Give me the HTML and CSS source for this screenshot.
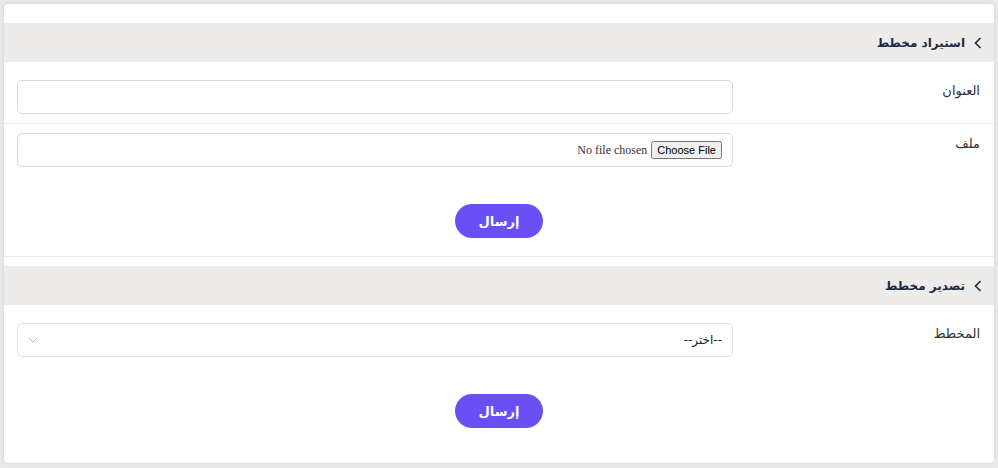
FILE: index.html
```html
<!DOCTYPE html>
<html lang="ar" dir="rtl">
<head>
  <meta charset="UTF-8">
  <title>المخططات</title>
  <link rel="stylesheet" href="styles.css">
</head>
<body>
  <div class="card">
    <div class="section">
      <div class="section-head">
        <svg class="chev" width="8" height="12" viewBox="0 0 8 12"><path d="M6.5 1 L1.5 6 L6.5 11" fill="none" stroke="#1f2a44" stroke-width="1.6"/></svg>
        <span>استيراد مخطط</span>
      </div>
      <div class="form">
        <div class="row sep">
          <label>العنوان</label>
          <div class="field"><input type="text" class="input"></div>
        </div>
        <div class="row">
          <label>ملف</label>
          <div class="field"><div class="input file-box"><input type="file"></div></div>
        </div>
        <div class="actions"><button class="btn">إرسال</button></div>
      </div>
    </div>

    <div class="section last">
      <div class="section-head">
        <svg class="chev" width="8" height="12" viewBox="0 0 8 12"><path d="M6.5 1 L1.5 6 L6.5 11" fill="none" stroke="#1f2a44" stroke-width="1.6"/></svg>
        <span>تصدير مخطط</span>
      </div>
      <div class="form">
        <div class="row">
          <label>المخطط</label>
          <div class="field">
            <div class="input select-box">
              <span>--اختر--</span>
              <svg width="10" height="6" viewBox="0 0 10 6"><path d="M1 1 L5 5 L9 1" fill="none" stroke="#b9b3c4" stroke-width="1"/></svg>
            </div>
          </div>
        </div>
        <div class="actions"><button class="btn">إرسال</button></div>
      </div>
    </div>
  </div>
</body>
</html>
```

FILE: styles.css
```css
body {
  margin: 0;
  padding: 4px;
  background: #e9e9e9;
  font-family: "DejaVu Sans", sans-serif;
  color: #333;
}
.card {
  background: #fff;
  border-radius: 4px;
  box-shadow: 0 0 3px rgba(0, 0, 0, 0.12);
  padding-top: 19px;
  height: 459px;
  box-sizing: border-box;
  overflow: hidden;
}
.section {
  border-bottom: 1px solid #ececec;
  margin-bottom: 9px;
}
.section.last {
  border-bottom: none;
  margin-bottom: 0;
}
.section-head {
  background: #edecea;
  height: 39px;
  display: flex;
  align-items: center;
  gap: 9px;
  padding-right: 12px;
  font-size: 12px;
  font-weight: bold;
  color: #1f2a44;
}
.form {
  padding-top: 18px;
}
.row {
  display: grid;
  grid-template-columns: 1fr 716px;
  padding: 0 14px 0 13px;
}
.row.sep {
  border-bottom: 1px solid #ececec;
  padding-bottom: 9px;
  margin-bottom: 9px;
}
.row label {
  font-size: 13px;
  padding-top: 3px;
  color: #333;
}
.input {
  display: block;
  width: 100%;
  height: 34px;
  box-sizing: border-box;
  border: 1px solid #d9d9d9;
  border-radius: 5px;
  background: #fff;
  font-family: inherit;
}
.file-box {
  display: flex;
  align-items: center;
  padding: 0 10px;
}
.file-box input {
  font-family: "Liberation Serif", serif;
  font-size: 12px;
}
.file-box input::file-selector-button {
  font-family: "Liberation Sans", sans-serif;
  font-size: 11px;
  padding: 1px 4px;
  margin-left: 4px;
}
.select-box {
  display: flex;
  align-items: center;
  justify-content: space-between;
  padding: 0 10px;
  border-color: #e2e2e2;
  font-size: 12px;
  color: #222;
}
.actions {
  display: flex;
  justify-content: center;
  padding: 37px 0 18px;
}
.btn {
  width: 88px;
  height: 34px;
  border: none;
  border-radius: 17px;
  background: #6a4ff5;
  color: #fff;
  font-family: inherit;
  font-weight: bold;
  font-size: 13px;
  cursor: pointer;
}
```
